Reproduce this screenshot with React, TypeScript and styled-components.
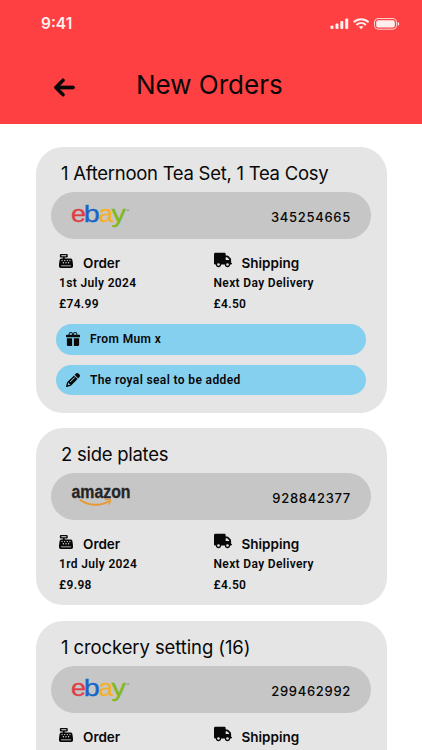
import React from "react";
import styled, { createGlobalStyle } from "styled-components";
import { FaArrowLeft, FaCashRegister, FaTruck, FaPencil } from "react-icons/fa6";
import { BsGiftFill } from "react-icons/bs";

const GlobalStyle = createGlobalStyle`
  * { box-sizing: border-box; }
  body { margin: 0; background: #fff; color: #080808; overflow: hidden; }
`;

const Screen = styled.div`
  width: 422px;
  height: 750px;
  overflow: hidden;
  background: #fff;
  font-family: Roboto, sans-serif;
`;

const Header = styled.header`
  height: 123.5px;
  background: #ff4043;
`;

const StatusBar = styled.div`
  height: 48px;
  padding: 0 22px 0 41px;
  display: flex;
  align-items: center;
  justify-content: space-between;
`;

const Clock = styled.span`
  color: #ffeeee;
  font: 600 15.5px/20px Inter, sans-serif;
  letter-spacing: 0;
`;

const NavBar = styled.div`
  display: grid;
  grid-template-columns: 136px 1fr;
  height: 75px;
  align-items: start;
`;

const BackButton = styled.button`
  border: 0;
  padding: 0;
  margin: 27px 0 0 53px;
  width: 24px;
  height: 24px;
  background: none;
  color: #080808;
  svg { display: block; stroke: currentColor; stroke-width: 18px; }
`;

const PageTitle = styled.h1`
  margin: 20px 0 0;
  font: 400 26px/34px Inter, sans-serif;
  letter-spacing: 0;
  white-space: nowrap;
`;

const Orders = styled.main`
  display: flex;
  flex-direction: column;
  gap: 15.5px;
  padding: 23.5px 35.5px 0 35.5px;
`;

const Card = styled.article<{ $height: number }>`
  height: ${(p) => p.$height}px;
  flex: none;
  border-radius: 27px;
  background: #e5e5e5;
  padding: 15px 15.5px 0;
`;

const CardTitle = styled.h2<{ $tracking: number }>`
  margin: 0 0 7px 10px;
  font: 400 18.5px/23px Inter, sans-serif;
  letter-spacing: ${(p) => p.$tracking}px;
  white-space: nowrap;
`;

const SourceBar = styled.div`
  height: 47px;
  border-radius: 24px;
  background: #c6c6c6;
  display: flex;
  justify-content: space-between;
  padding: 0 20px;
  svg { overflow: visible; }
`;

const OrderNumber = styled.span`
  margin-top: 15px;
  font: 500 13px/20px Inter, sans-serif;
  letter-spacing: 0.7px;
`;

const Details = styled.div`
  display: grid;
  grid-template-columns: 154.5px 1fr;
  padding: 13px 0 0 8px;
`;

const DetailHead = styled.div`
  display: flex;
  gap: 10px;
  height: 21px;
`;

const RegisterIcon = styled(FaCashRegister)`
  margin-top: 2px;
`;

const TruckIcon = styled(FaTruck)`
  margin-top: -1px;
`;

const DetailName = styled.h3`
  margin: 1px 0 0;
  font: 600 13.5px/20px Inter, sans-serif;
`;

const DetailLine = styled.p`
  margin: 0;
  font-size: 12px;
  font-weight: 600;
  line-height: 20.5px;
  letter-spacing: 0.35px;
  white-space: nowrap;
`;

const Notes = styled.div`
  display: flex;
  flex-direction: column;
  gap: 10px;
  padding: 10px 5px 0;
`;

const Note = styled.div`
  height: 30.5px;
  border-radius: 16px;
  background: #86d0ef;
  display: flex;
  align-items: center;
  gap: 10px;
  padding-left: 10px;
  font-size: 12px;
  font-weight: 600;
  letter-spacing: 0.37px;
`;

const EbayMark = () => (
  <svg width="60" height="47" viewBox="0 0 60 47" fontFamily="Liberation Sans, sans-serif" fontSize="24">
    <text x="0" y="30" fill="#dd3d45" stroke="#dd3d45" strokeWidth=".35" textLength="15" lengthAdjust="spacingAndGlyphs">e</text>
    <text x="12.8" y="30" fill="#1765c8" stroke="#1765c8" strokeWidth=".35" textLength="16" lengthAdjust="spacingAndGlyphs">b</text>
    <text x="27.8" y="30" fill="#f5af2b" stroke="#f5af2b" strokeWidth=".35" textLength="14.5" lengthAdjust="spacingAndGlyphs">a</text>
    <text x="40.5" y="30" fill="#83b81b" stroke="#83b81b" strokeWidth=".35" textLength="14.5" lengthAdjust="spacingAndGlyphs">y</text>
    <path d="M56 18.2h2.2" stroke="#777" strokeWidth=".8" />
  </svg>
);

const AmazonMark = () => (
  <svg width="60" height="47" viewBox="0 0 60 47">
    <text x="0.5" y="25.2" fill="#252525" stroke="#252525" strokeWidth=".3" fontFamily="Liberation Sans, sans-serif" fontWeight="700" fontSize="17.5" textLength="59" lengthAdjust="spacingAndGlyphs">amazon</text>
    <path d="M9.500 27c8 6 20 6.300 28.500 1.300" fill="none" stroke="#e8982e" strokeWidth="1.9" strokeLinecap="round" />
    <path d="M34.500 26.800c2-1 4.800-1 5 0 .2 1-.5 3-1.700 4.200" fill="none" stroke="#e8982e" strokeWidth="1.3" strokeLinecap="round" />
  </svg>
);

const StatusIcons = () => (
  <svg width="70" height="14" viewBox="0 0 70 14" fill="#ffeeee">
    <rect x=".5" y="8.500" width="3" height="3.500" rx="1" />
    <rect x="5.500" y="6.500" width="3" height="5.500" rx="1" />
    <rect x="10.300" y="4" width="3" height="8" rx="1" />
    <rect x="15.200" y="1.500" width="3" height="10.500" rx="1" />
    <g fill="none" stroke="#ffeeee" strokeWidth="2">
      <path d="M23.700 5.200c4.300-4 10.600-4 14.900 0" />
      <path d="M26.400 8c2.800-2.600 6.700-2.600 9.500 0" />
    </g>
    <path d="M28.800 9.800c1.400-1.200 3.300-1.200 4.700 0L31.150 12.300Z" />
    <rect x="44.500" y="1.500" width="22" height="10.700" rx="3.500" fill="none" stroke="#ffd0d0" />
    <rect x="46.200" y="3.200" width="18.600" height="7.300" rx="2" />
    <path d="M67.800 5c1.900.6 1.900 3.200 0 3.800Z" />
  </svg>
);

type Order = {
  title: string;
  tracking: number;
  source: "ebay" | "amazon";
  number: string;
  date?: string;
  price?: string;
  delivery?: [string, string];
  height: number;
  notes?: [string, string];
};

const orders: Order[] = [
  { title: "1 Afternoon Tea Set, 1 Tea Cosy", tracking: -0.27, source: "ebay", number: "345254665", date: "1st July 2024", price: "£74.99", delivery: ["Next Day Delivery", "£4.50"], height: 265.5, notes: ["From Mum x", "The royal seal to be added"] },
  { title: "2 side plates", tracking: -0.27, source: "amazon", number: "928842377", date: "1rd July 2024", price: "£9.98", delivery: ["Next Day Delivery", "£4.50"], height: 177 },
  { title: "1 crockery setting (16)", tracking: -0.1, source: "ebay", number: "299462992", height: 177 },
];

export default function App() {
  return (
    <Screen>
      <GlobalStyle />
      <Header>
        <StatusBar><Clock>9:41</Clock><StatusIcons /></StatusBar>
        <NavBar>
          <BackButton aria-label="Back"><FaArrowLeft size={23} /></BackButton>
          <PageTitle>New Orders</PageTitle>
        </NavBar>
      </Header>
      <Orders>
        {orders.map((order) => (
          <Card key={order.number} $height={order.height}>
            <CardTitle $tracking={order.tracking}>{order.title}</CardTitle>
            <SourceBar>
              {order.source === "ebay" ? <EbayMark /> : <AmazonMark />}
              <OrderNumber>{order.number}</OrderNumber>
            </SourceBar>
            <Details>
              <section>
                <DetailHead><RegisterIcon size={14} /><DetailName>Order</DetailName></DetailHead>
                {order.date && <DetailLine>{order.date}</DetailLine>}
                {order.price && <DetailLine>{order.price}</DetailLine>}
              </section>
              <section>
                <DetailHead><TruckIcon size={18} /><DetailName>Shipping</DetailName></DetailHead>
                {order.delivery?.map((line) => <DetailLine key={line}>{line}</DetailLine>)}
              </section>
            </Details>
            {order.notes && (
              <Notes>
                <Note><BsGiftFill size={14} />{order.notes[0]}</Note>
                <Note><FaPencil size={14} />{order.notes[1]}</Note>
              </Notes>
            )}
          </Card>
        ))}
      </Orders>
    </Screen>
  );
}
